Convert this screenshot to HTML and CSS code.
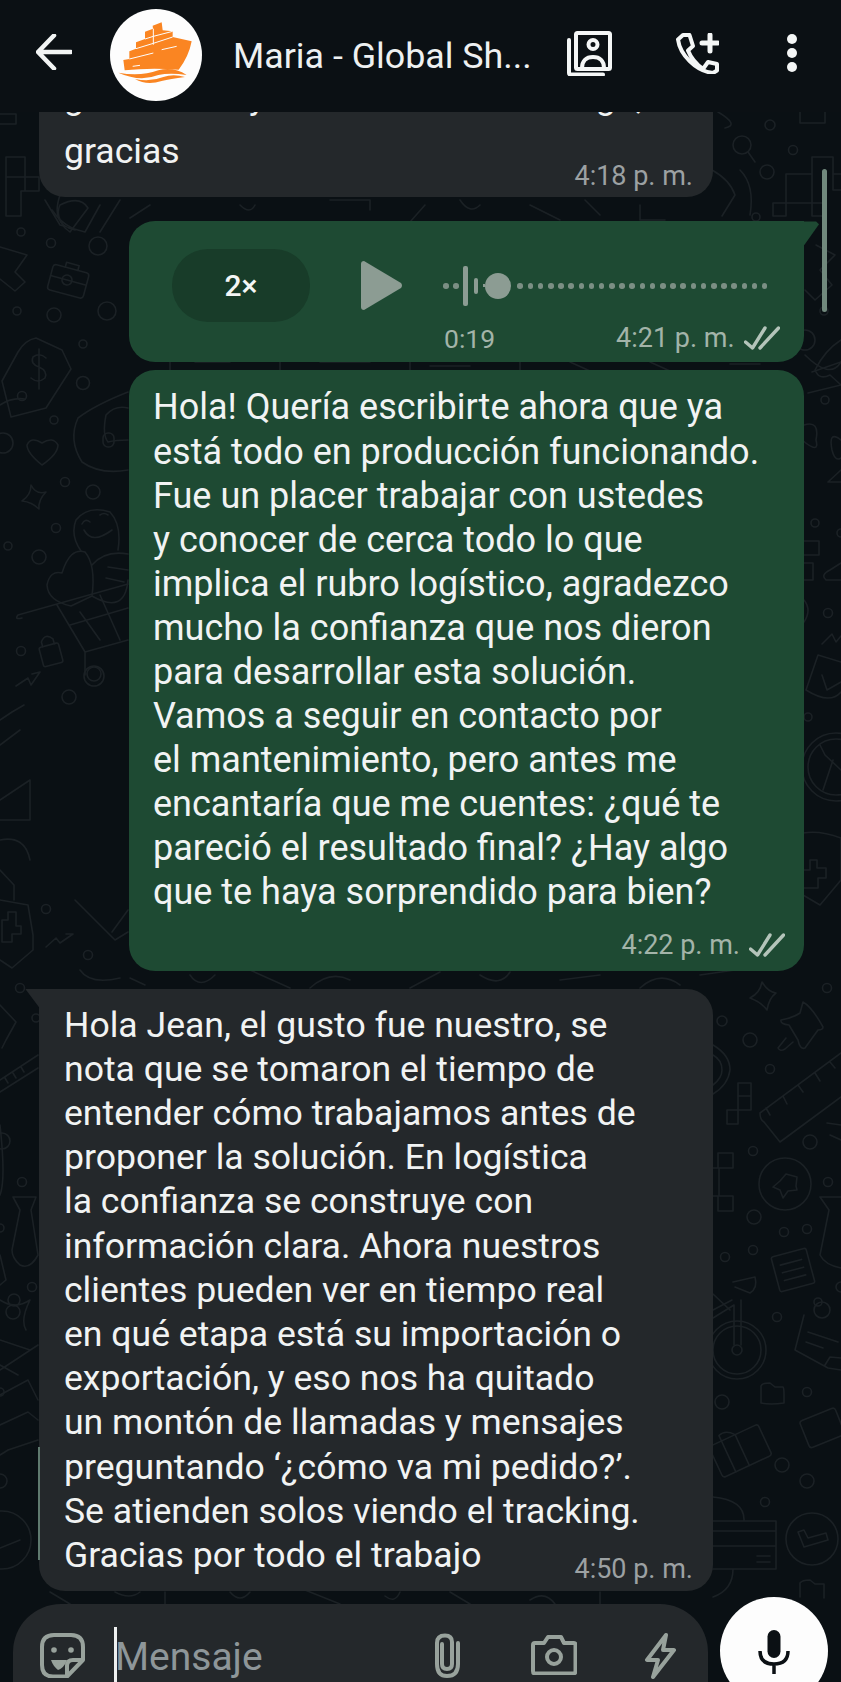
FILE: index.html
```html
<!DOCTYPE html>
<html lang="es">
  <head>
    <meta charset="UTF-8" />
    <title>Maria - Global Shipping</title>
    <link rel="stylesheet" href="styles.css">
  </head>
  <body>
    <div class="phone">
      <header class="topbar">
        <svg class="back-icon" viewBox="0 0 36 36"><path d="M35 18H3M18 1.500 2 18l16 16.500" /></svg>
        <svg class="avatar" viewBox="60 28 276 276">
          <circle cx="198" cy="166" r="138" fill="#fdfdfd" />
          <path fill="#fa8522" d="M100 181 118 178V155L138 147V128L165 118V96L189 87 188 78 215 68 218 92 248 95V112L305 125Q296 172 266 210Q180 203 104 212Z" />
          <path fill="none" stroke="#fdfdfd" stroke-width="3" d="M118 178 190 160M138 147 190 131M165 118 190 110M190 87V135M190 110 248 95M190 131 248 112M215 150 260 140M128 200 150 197" />
          <path fill="#fa8522" d="M85 219Q150 232 205 212Q250 200 290 226Q240 218 205 226Q150 248 85 219ZM135 238Q180 248 220 232Q250 222 285 232Q240 238 215 244Q170 258 135 238Z" />
        </svg>
        <div class="contact-name">Maria - Global Sh...</div>
        <svg class="contacts-icon" viewBox="0 0 45 45"><path d="M9 3.500a1.500 1.500 0 0 1 1.500-1.500h31a1.500 1.500 0 0 1 1.500 1.500v33a1.500 1.500 0 0 1-1.500 1.500h-31a1.500 1.500 0 0 1-1.500-1.500zM2 9v33a1.500 1.500 0 0 0 1.500 1.500H36" /><circle cx="26" cy="13.500" r="4.500" /><path d="M15 37c0-7 4-11 11-11s11 4 11 11" /></svg>
        <svg class="call-icon" viewBox="0 0 43 41"><path d="M2 6.500 7 2 13.500 2 17 13 12 17.500C15 25 20 31 27 36L32 29 41 31V37.500L37 40C20 38 4 22 2 6.500Z" /><path class="thick" d="M26 10H42M34 2V18" /></svg>
        <div class="menu-dots"><span></span><span></span><span></span></div>
      </header>

      <main class="chat">
        <svg class="doodles" viewBox="0 0 841 1682">
          <!-- wallpaper, top left -->
          <path d="M6 200V157H25V177H39V191H21M6 177H25V191M6 191V216H21V191M0 114H16V124H0" />
          <circle cx="21" cy="232" r="4" /><circle cx="51" cy="243" r="4.500" /><circle cx="98" cy="246" r="9" />
          <circle cx="17" cy="311" r="4" /><circle cx="54" cy="315" r="7" /><circle cx="107" cy="311" r="9" />
          <circle cx="83" cy="344" r="4" /><circle cx="83" cy="383" r="6.500" /><circle cx="54" cy="420" r="4" />
          <circle cx="65" cy="482" r="4.500" /><circle cx="93" cy="492" r="7" /><circle cx="56" cy="528" r="4.500" />
          <circle cx="39" cy="557" r="7" /><circle cx="8" cy="546" r="4" /><circle cx="21" cy="651" r="4.500" />
          <circle cx="94" cy="674" r="7" /><circle cx="3" cy="443" r="10" />
          <path d="M0 247 27 255 15 272 25 282 15 291 0 279" />
          <g transform="rotate(15 67 280)"><rect x="50" y="268" width="37" height="26" rx="3" /><path d="M50 280H87M62 268V263H75V268" /><circle cx="67" cy="280" r="5" /></g>
          <path d="M60 205Q80 195 88 208L70 232 65 228Q55 215 60 205ZM52 210Q60 222 72 228" />
          <path d="M2 381 11 417 46 408 71 369 62 350 36 338Q25 340 18 352ZM0 405Q12 397 25 399" /><circle cx="22" cy="396" r="4.500" />
          <path d="M46 358Q40 352 33 357Q30 364 39 367Q48 371 45 378Q38 384 31 378M39 349V389" />
          <path d="M42 465Q27 453 27 445Q31 436 42 443Q53 436 58 445Q58 454 42 465Z" />
          <path d="M31 485Q36 495 46 492Q38 500 39 509Q32 502 22 501Q31 495 31 485Z" />
          <path d="M128 392Q95 405 78 418Q68 440 82 462Q100 475 128 470M128 440Q116 440 108 442Q102 435 106 415Q115 405 128 408" /><rect x="103" y="433" width="11" height="14" rx="5" />
          <path d="M81 551Q70 535 76 520Q88 505 110 512Q122 525 118 550" /><path d="M82 524Q85 518 90 522M100 515Q104 512 108 515M84 530Q92 545 112 530" />
          <path d="M71 606Q48 601 47 585Q50 570 62 573Q70 547 85 552Q96 565 92 596ZM92 596Q125 615 128 580M92 565Q105 550 128 554M108 567 128 570M106 578 124 582" />
          <path d="M18 615 128 584M57 605 85 652 128 640M70 625 128 608M80 612 100 640M100 595 120 640M85 652V675M18 615Q14 620 22 618" />
          <circle cx="94" cy="676" r="10" />
          <g transform="rotate(-15 50 651)"><rect x="40" y="645" width="20" height="20" rx="2" /><path d="M44 645V640Q50 632 56 640V645" /></g>
          <path d="M16 686 28 678 31 685 40 672 32 674" /><circle cx="69" cy="697" r="7" />
          <path d="M0 720 12 712 24 705M0 745 20 730M0 800 30 780V820H0M0 840Q25 835 30 860" />
          <path d="M0 870 14 885V900" />
          <!-- wallpaper, left middle -->
          <path d="M0 900 28 905 33 935 33 950 12 968 0 960" /><path d="M2 920H8V912H16V926H21V934H12V942H2Z" />
          <path d="M46 947 56 938 60 943 73 934 66 934" /><circle cx="46" cy="909" r="4.500" /><circle cx="88" cy="955" r="4.500" />
          <path d="M75 900 115 940 128 932M128 910 112 932" />
          <circle cx="20" cy="988" r="4.500" /><circle cx="36" cy="1018" r="4" />
          <path d="M0 1005 16 1022 6 1040 2 1048" /><path d="M0 1080 38 1055M0 1092 38 1068M8 1083 5 1078M16 1078 13 1073M24 1072 21 1067" />
          <!-- wallpaper, left lower -->
          <circle cx="22" cy="1182" r="4.500" /><circle cx="32" cy="1287" r="4.500" /><circle cx="0" cy="1228" r="4" /><circle cx="0" cy="1392" r="4" /><circle cx="0" cy="1481" r="7" />
          <path d="M13 1197H36L31 1210 38 1255Q30 1270 20 1265 12 1258 12 1250L20 1210Z" />
          <circle cx="2" cy="1141" r="8" /><path d="M0 1125Q6 1180 0 1195" />
          <path d="M0 1255 6 1280 0 1285M0 1300Q15 1310 30 1300 20 1320 26 1330M0 1340 30 1350M0 1370 38 1345M0 1365 18 1375" />
          <circle cx="14" cy="1300" r="6" /><circle cx="13" cy="1312" r="7" />
          <path d="M0 1425 28 1412 38 1420M0 1455Q5 1452 8 1450L38 1440" /><path d="M0 1395 28 1380 38 1400" />
          <circle cx="2" cy="1540" r="29" /><path d="M0 1548 20 1540" />
          <!-- wallpaper, right top -->
          <path d="M800 112V123H825V112M718 112Q740 125 725 128" />
          <circle cx="770" cy="125" r="5" /><circle cx="793" cy="150" r="4.500" /><circle cx="767" cy="172" r="7" /><circle cx="742" cy="145" r="9" /><path d="M748 152 755 162" />
          <path d="M773 216V203H786V174H812V157H833V174H841M773 216H786V203H812V216H825V174M812 174V203M812 203H825M833 157V190H841" />
          <path d="M740 170Q755 185 750 215M712 170Q730 180 735 195L722 216" />
          <circle cx="756" cy="217" r="4" />
          <path d="M816 245 835 255 820 270 832 285 815 300 805 290" /><circle cx="824" cy="311" r="4" /><circle cx="805" cy="340" r="10" />
          <path d="M841 340Q825 350 815 370M805 355Q830 380 841 362" />
          <!-- wallpaper, right middle -->
          <path d="M812 372 841 362M808 393 841 385 830 375Q820 380 816 372" /><circle cx="825" cy="400" r="4" />
          <path d="M804 425Q820 420 816 440 820 455 802 440M841 440Q828 430 832 450 835 462 841 458M841 470 828 482H841" />
          <circle cx="815" cy="523" r="4" /><circle cx="841" cy="533" r="4" />
          <path d="M804 541H819V555H804M804 563H813V580H804M841 563 830 570Q820 575 826 580H841" />
          <circle cx="828" cy="613" r="4.500" /><path d="M804 600Q812 610 804 622M822 644 832 634 836 642 841 636" />
          <path d="M806 690 818 655 841 662M806 690Q830 705 841 692M822 675 827 690 841 682" /><circle cx="808" cy="717" r="4" />
          <circle cx="836" cy="767" r="34" /><circle cx="836" cy="767" r="28" /><path d="M820 745 825 755 841 770M823 790 833 760" />
          <path d="M803 833Q820 830 841 838V880L820 905 803 895" /><path d="M804 870H810V860H817V868H826V878H818V888H804" />
          <!-- wallpaper, right lower -->
          <path d="M762 982Q768 992 776 993 769 998 767 1010 761 1002 750 998 760 993 762 982Z" /><circle cx="827" cy="988" r="4.500" />
          <path d="M803 1002Q812 1007 823 1027Q823 1030 818 1030L805 1048Q800 1050 798 1040L789 1025Q780 1024 781 1020 793 1018 800 1013ZM786 1038 778 1048Q780 1052 785 1049L793 1042" />
          <circle cx="750" cy="1040" r="7" /><circle cx="722" cy="1021" r="5" /><circle cx="770" cy="1069" r="4.500" /><circle cx="810" cy="1142" r="7" />
          <circle cx="753" cy="1151" r="4.500" /><circle cx="828" cy="1182" r="4.500" /><circle cx="754" cy="1217" r="7" />
          <circle cx="784" cy="1232" r="4.500" /><circle cx="807" cy="1229" r="4.500" /><circle cx="753" cy="1250" r="4.500" /><circle cx="725" cy="1257" r="4.500" />
          <path d="M760 1113 841 1053M760 1113Q760 1120 764 1122L780 1142 841 1097M766 1108 770 1115M783 1096 787 1104M798 1085 803 1092M815 1073 820 1081M830 1062 835 1068" />
          <circle cx="785" cy="1184" r="26" />
          <path d="M786 1174 797 1177 796 1186 797 1190 788 1191 783 1198 780 1190 773 1187 780 1181Z" />
          <path d="M738 1083H751V1110H738ZM738 1096H751M727 1110H738V1124H727Z" />
          <path d="M718 1153H733V1168H718ZM718 1196H733V1211H718ZM719 1168V1196M713 1168H719M713 1196H719" />
          <path d="M713 1045Q730 1055 730 1070 728 1085 713 1094M713 1055Q722 1060 722 1070 722 1078 713 1085" />
          <path d="M820 1197H841M820 1197 829 1210 820 1255Q825 1265 841 1268" />
          <path d="M827 1123 841 1125M830 1135 841 1140" />
          <g transform="rotate(-15 793 1270)"><rect x="775" y="1252" width="36" height="36" rx="2" /><path d="M782 1262H804M782 1270H804M782 1278H804" /></g>
          <path d="M713 1294 730 1310M733 1282 755 1277Q758 1288 750 1293L735 1287" /><circle cx="841" cy="1287" r="5" />
          <circle cx="737" cy="1350" r="29" /><circle cx="737" cy="1350" r="24" /><circle cx="737" cy="1350" r="5" /><path d="M734 1345V1305M741 1345V1300M713 1318 734 1305M713 1310 732 1300" />
          <circle cx="777" cy="1317" r="4.500" /><circle cx="807" cy="1392" r="4.500" /><circle cx="722" cy="1402" r="7" /><circle cx="782" cy="1465" r="7" /><circle cx="807" cy="1481" r="7" /><circle cx="765" cy="1502" r="4.500" />
          <path d="M761 1403V1386Q762 1383 770 1383L775 1387H783Q784 1388 784 1394V1403Q770 1405 761 1403Z" />
          <path d="M804 1315 795 1350 828 1368 841 1370M808 1332 838 1342M806 1342 823 1348M825 1365 830 1357 841 1358" /><circle cx="822" cy="1310" r="8" /><circle cx="818" cy="1302" r="4" />
          <g transform="rotate(-25 740 1450)"><rect x="713" y="1434" width="54" height="34" rx="3" /><path d="M727 1434V1468M742 1434V1468M727 1434V1428Q735 1425 742 1434" /></g>
          <g transform="rotate(-22 823 1427)"><rect x="803" y="1413" width="38" height="29" rx="3" /></g>
          <path d="M713 1497Q745 1500 744 1521M713 1521H776V1569H713M713 1531H776M713 1546H776M757 1556H770M757 1562H770M733 1569Q733 1590 713 1597" />
          <circle cx="812" cy="1539" r="26" /><path d="M798 1532 804 1547 828 1540 826 1533 808 1538 804 1530Z" />
          <path d="M800 1597V1583Q802 1580 810 1580L815 1584H824Q824 1590 824 1598" />
          <!-- bits between the bubbles -->
          <path d="M45 200 60 225 85 232 100 205M120 200 100 232M60 195Q50 225 75 230M150 205 130 218M240 205Q250 215 255 205M330 200H370V210M425 205 410 222M460 200Q470 215 480 205M530 205 560 220M585 200 600 215M640 205V220H665" />
          <path d="M170 362V371M195 362H230M280 362V371M320 362H370M410 362V371M430 366H470M520 362V371M570 362 590 371M650 362 670 371M730 364H760" />
          <path d="M80 970Q90 985 120 978M130 978 145 985M190 975Q200 990 215 975M250 970 290 988M310 988Q330 970 350 980M410 988 440 972M480 975Q500 988 510 972M560 980 600 975M640 988Q660 970 680 985M700 975 735 970" />
          <path d="M50 1592 70 1604M115 1592Q130 1600 140 1592M165 1592V1604M230 1592Q240 1604 250 1592M305 1590 340 1604M385 1596Q395 1604 400 1592M450 1592 470 1604M530 1600Q545 1590 555 1604M600 1592V1604M650 1590H680" />
        </svg>

        <article class="bubble bubble-in first">
          <div class="msg-text clipped-line">gestionada y conforme el trato largo,</div>
          <div class="msg-text">gracias</div>
          <div class="meta meta-overlap-small"><span class="time">4:18 p. m.</span></div>
        </article>

        <article class="bubble bubble-out audio tailed">
          <div class="audio-row">
            <div class="speed-pill">2×</div>
            <svg class="play-icon" viewBox="0 0 41 49"><path d="M3 0 40 22Q42 24.500 40 27L3 49Q0 49 0 46V3Q0 0 3 0Z" /></svg>
            <div class="wave">
              <span class="dot"></span><span class="dot"></span><span class="bar tall"></span><span class="bar short"></span><span class="nub"></span><span class="knob"></span>
              <span class="dot"></span><span class="dot"></span><span class="dot"></span><span class="dot"></span><span class="dot"></span>
              <span class="dot"></span><span class="dot"></span><span class="dot"></span><span class="dot"></span><span class="dot"></span>
              <span class="dot"></span><span class="dot"></span><span class="dot"></span><span class="dot"></span><span class="dot"></span>
              <span class="dot"></span><span class="dot"></span><span class="dot"></span><span class="dot"></span><span class="dot"></span>
              <span class="dot"></span><span class="dot"></span><span class="dot"></span><span class="dot"></span><span class="dot"></span>
            </div>
          </div>
          <div class="audio-foot">
            <span class="duration">0:19</span>
            <span class="time">4:21 p. m.</span>
            <svg class="ticks" viewBox="0 0 36 24"><path d="M1.500 16 8.500 22 21 2M16 22 34.500 2" /></svg>
          </div>
        </article>

        <article class="bubble bubble-out long">
          <div class="msg-text">Hola! Quería escribirte ahora que ya<br />está todo en producción funcionando.<br />Fue un placer trabajar con ustedes<br />y conocer de cerca todo lo que<br />implica el rubro logístico, agradezco<br />mucho la confianza que nos dieron<br />para desarrollar esta solución.<br />Vamos a seguir en contacto por<br />el mantenimiento, pero antes me<br />encantaría que me cuentes: ¿qué te<br />pareció el resultado final? ¿Hay algo<br />que te haya sorprendido para bien?</div>
          <div class="meta meta-below">
            <span class="time">4:22 p. m.</span>
            <svg class="ticks" viewBox="0 0 36 24"><path d="M1.500 16 8.500 22 21 2M16 22 34.500 2" /></svg>
          </div>
        </article>

        <article class="bubble bubble-in reply tailed-left">
          <div class="msg-text">Hola Jean, el gusto fue nuestro, se<br />nota que se tomaron el tiempo de<br />entender cómo trabajamos antes de<br />proponer la solución. En logística<br />la confianza se construye con<br />información clara. Ahora nuestros<br />clientes pueden ver en tiempo real<br />en qué etapa está su importación o<br />exportación, y eso nos ha quitado<br />un montón de llamadas y mensajes<br />preguntando ‘¿cómo va mi pedido?’.<br />Se atienden solos viendo el tracking.<br />Gracias por todo el trabajo</div>
          <div class="meta meta-overlap"><span class="time">4:50 p. m.</span></div>
        </article>

        <div class="scroll-thumb"></div>
        <div class="edge-line"></div>
      </main>

      <footer class="composer">
        <div class="input-pill">
          <svg class="sticker-icon" viewBox="0 0 45 45"><path d="M15 43.500H13Q2 43.500 2 32V14Q2 2 14 2H31Q43 2 43 14V27L27 43.500H15ZM43 27H33Q27 27 27 33V43.500" /><circle cx="14" cy="17" r="2.800" class="solid" /><circle cx="31" cy="17" r="2.800" class="solid" /><path d="M11 27H27Q24 35 18 37Q13 33 11 27Z" class="solid" /></svg>
          <span class="caret"></span>
          <span class="placeholder">Mensaje</span>
          <svg class="clip-icon" viewBox="0 0 30 45"><path d="M10 11V31Q10 36 15 36Q20 36 20 31V9Q20 2.500 13 2.500Q5 2.500 5 10V31Q5 43 15 43Q26 43 26 31V10" /></svg>
          <svg class="camera-icon" viewBox="0 0 46 40"><path d="M2 10Q2 8 4 8H13L17 2H30L33 8H43Q44.500 8 44.500 10V36Q44.500 38.500 42 38.500H4Q2 38.500 2 36Z" /><circle cx="23" cy="22" r="7" /></svg>
          <svg class="bolt-icon" viewBox="0 0 33 46"><path d="M22 2 3 27H14L9 44 30 17H19Z" /></svg>
        </div>
        <div class="mic-btn">
          <svg class="mic-icon" viewBox="0 0 32 44"><rect x="9.500" y="0" width="13" height="28" rx="6.500" fill="#0b1014" /><path fill="none" stroke="#0b1014" stroke-width="3.500" d="M2 21Q2 34 16 34Q30 34 30 21M16 34V44" /></svg>
        </div>
      </footer>
    </div>
  </body>
</html>
```

FILE: styles.css
```css
* {
  box-sizing: border-box;
}

html,
body {
  margin: 0;
  padding: 0;
  background-color: #0a1014;
}

body {
  font-family: Roboto, "Noto Sans", sans-serif;
  color: #eceff0;
}

.phone {
  width: 841px;
  height: 1682px;
  display: flex;
  flex-direction: column;
  overflow: hidden;
}

/* top bar */
.topbar {
  height: 112px;
  flex: none;
  display: flex;
  align-items: center;
  background-color: #0b1014;
  position: relative;
  z-index: 2;
  padding-left: 36px;
}

.topbar svg {
  flex: none;
}

.back-icon {
  width: 36px;
  height: 36px;
  margin-top: -8px;
  fill: none;
  stroke: #f2f4f4;
  stroke-width: 4.500;
  stroke-linecap: round;
  stroke-linejoin: round;
}

.avatar {
  width: 92px;
  height: 92px;
  margin-left: 38px;
  margin-top: -2px;
}

.contact-name {
  width: 334px;
  margin-left: 31px;
  font-size: 35.800px;
  white-space: nowrap;
  color: #eef0f1;
}

.contacts-icon,
.call-icon {
  fill: none;
  stroke: #f4f6f6;
  stroke-width: 4;
  stroke-linejoin: round;
  stroke-linecap: round;
}

.contacts-icon {
  width: 45px;
  height: 45px;
  margin-top: -5px;
}

.call-icon {
  width: 43px;
  height: 41px;
  margin-left: 64px;
  margin-top: -6px;
}

.call-icon .thick {
  stroke-width: 5;
}

.menu-dots {
  display: flex;
  flex-direction: column;
  gap: 4px;
  margin-left: 68px;
  margin-top: -6px;
}

.menu-dots span {
  width: 10px;
  height: 10px;
  border-radius: 50%;
  background-color: #f4f6f6;
}

/* chat */
.chat {
  flex: 1;
  min-height: 0;
  position: relative;
  display: flex;
  flex-direction: column;
  align-items: flex-start;
}

.doodles {
  position: absolute;
  left: 0;
  top: -112px;
  width: 841px;
  height: 1682px;
  fill: none;
  stroke: #1b2125;
  stroke-width: 1.600;
  stroke-linejoin: round;
  stroke-linecap: round;
}

.bubble {
  position: relative;
  flex: none;
}

.bubble-in {
  width: 674px;
  margin-left: 39px;
  background-color: #24282b;
  padding: 14px 20px 7px 25px;
  border-radius: 26px;
}

.bubble-out {
  width: 675px;
  margin-left: 129px;
  background-color: #1e4a33;
  border-radius: 26px;
}

.msg-text {
  font-size: 36px;
  line-height: 44.100px;
  white-space: nowrap;
  color: #f1f3f3;
}

.bubble-in .msg-text {
  font-size: 35.600px;
  line-height: 44.200px;
}

.clipped-line {
  margin-bottom: 10px;
}

.meta {
  display: flex;
  justify-content: flex-end;
  align-items: center;
  height: 30px;
}

.time {
  font-size: 27px;
  color: #9ca1a3;
}

.bubble-out .time {
  color: #a3b4a9;
}

.meta-overlap {
  margin-top: -23px;
}

.meta-overlap-small {
  margin-top: -12px;
}

.meta-below {
  margin-top: 15px;
  margin-right: 3px;
}

.ticks {
  width: 36px;
  height: 24px;
  margin-left: 9px;
  fill: none;
  stroke: #b4c4ba;
  stroke-width: 3.400;
  stroke-linecap: round;
  stroke-linejoin: round;
}

.first {
  margin-top: -51px;
  padding-bottom: 6px;
  border-radius: 0 0 26px 26px;
}

/* voice note */
.audio {
  margin-top: 24px;
  height: 141px;
  padding: 28px 0 0 43px;
  border-radius: 26px 0 26px 26px;
}

.tailed::after {
  content: "";
  position: absolute;
  top: 0;
  right: -15px;
  width: 16px;
  height: 24px;
  background-color: #1e4a33;
  clip-path: polygon(0 0, 82% 0, 100% 12%, 6% 100%, 0 100%);
}

.audio-row {
  display: flex;
  align-items: center;
}

.speed-pill {
  width: 138px;
  height: 73px;
  border-radius: 36px;
  background-color: #183c29;
  display: flex;
  align-items: center;
  justify-content: center;
  font-size: 30px;
  font-weight: 500;
  color: #f4f6f5;
}

.play-icon {
  width: 41px;
  height: 49px;
  margin-left: 51px;
  fill: #8c9c93;
}

.wave {
  display: flex;
  align-items: center;
  margin-left: 41px;
}

.wave span {
  flex: none;
  background-color: #8c9c93;
}

.wave .dot {
  width: 5.600px;
  height: 5.600px;
  border-radius: 50%;
  margin-right: 4.600px;
  background-color: #7b8f84;
}

.bar {
  width: 4.500px;
  border-radius: 2px;
  margin-right: 6px;
}

.tall {
  height: 40px;
}

.short {
  height: 16px;
}

.nub {
  width: 2px;
  height: 3px;
  margin-left: -1px;
}

.wave .knob {
  width: 26px;
  height: 26px;
  border-radius: 50%;
  margin-right: 6px;
}

.audio-foot {
  display: flex;
  align-items: center;
  height: 30px;
  margin-top: 1px;
  padding-left: 272px;
}

.duration {
  font-size: 26.500px;
  color: #a3b4a9;
  margin-right: 121px;
}

/* long outgoing message */
.long {
  margin-top: 8px;
  padding: 15px 16px 11px 24px;
}

/* reply */
.reply {
  margin-top: 18px;
  border-top-left-radius: 0;
}

.tailed-left::before {
  content: "";
  position: absolute;
  top: 0;
  left: -14px;
  width: 15px;
  height: 20px;
  background-color: #24282b;
  clip-path: polygon(0 0, 100% 0, 100% 100%);
}

.scroll-thumb {
  position: absolute;
  left: 822px;
  top: 57px;
  width: 5px;
  height: 143px;
  border-radius: 3px;
  background-color: #71897d;
}

.edge-line {
  position: absolute;
  left: 38px;
  top: 1335px;
  width: 2px;
  height: 113px;
  background-color: #5f7a6f;
}

/* message input */
.composer {
  height: 85px;
  flex: none;
  position: relative;
  z-index: 1;
  display: flex;
  align-items: flex-start;
  padding-left: 13px;
}

.input-pill {
  width: 695px;
  height: 100px;
  flex: none;
  margin-top: 7px;
  border-radius: 48px 48px 0 0;
  background-color: #24282b;
  display: flex;
  align-items: flex-start;
  padding: 29px 0 0 27px;
}

.input-pill svg {
  flex: none;
  fill: none;
  stroke: #98a29c;
  stroke-width: 4;
  stroke-linejoin: round;
  stroke-linecap: round;
}

.sticker-icon {
  width: 45px;
  height: 45px;
}

.sticker-icon .solid {
  fill: #98a29c;
  stroke: none;
}

.caret {
  width: 3px;
  height: 60px;
  flex: none;
  margin: -6px 0 0 29px;
  background-color: #eef0f0;
}

.placeholder {
  font-size: 39px;
  line-height: 44px;
  margin: 2px 0 0 -2px;
  width: 317px;
  color: #8e9699;
}

.clip-icon {
  width: 30px;
  height: 45px;
}

.camera-icon {
  width: 46px;
  height: 40px;
  margin: 2px 0 0 69px;
}

.bolt-icon {
  width: 33px;
  height: 46px;
  margin-left: 67px;
}

.mic-btn {
  width: 108px;
  height: 108px;
  flex: none;
  margin-left: 12px;
  border-radius: 50%;
  background-color: #fdfdfd;
  display: flex;
  justify-content: center;
  padding-top: 33px;
}

.mic-icon {
  width: 32px;
  height: 44px;
}
```
